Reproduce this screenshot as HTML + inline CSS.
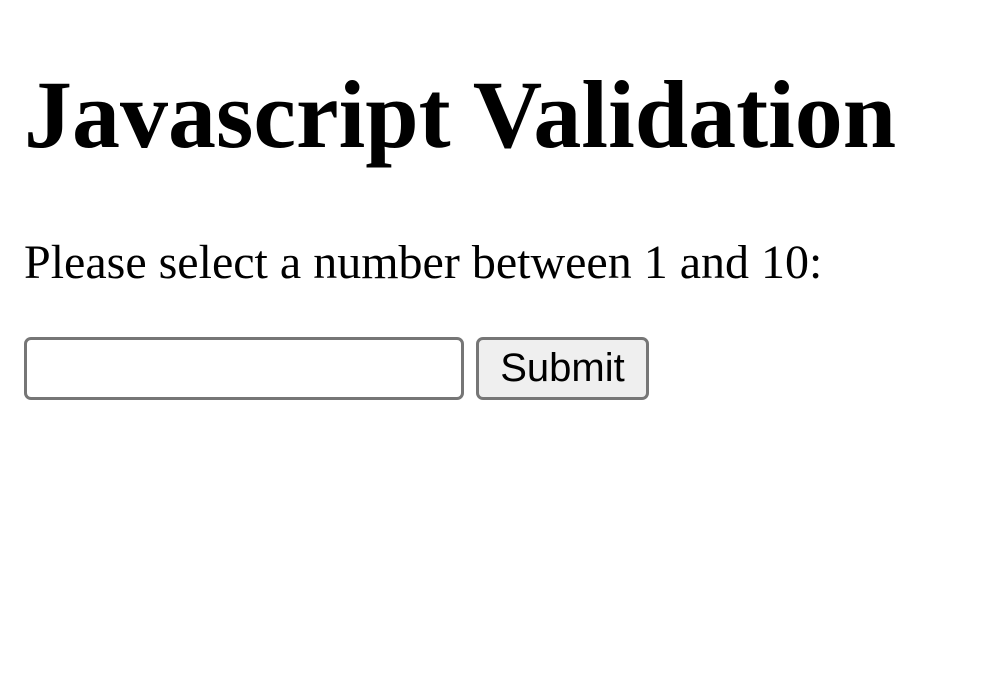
<!DOCTYPE html>
<html>
<head>
<meta charset="utf-8">
<style>
  html,body{margin:0;padding:0;background:#fff;}
  body{width:994px;height:696px;overflow:hidden;position:relative;font-family:"Liberation Serif",serif;color:#000;}
  h1{position:absolute;left:24px;top:60px;margin:0;font-size:96px;font-weight:bold;line-height:110px;white-space:nowrap;}
  p{position:absolute;left:24px;top:235px;margin:0;font-size:48px;line-height:56px;white-space:nowrap;}
  .inp{position:absolute;left:24px;top:337px;width:440px;height:63px;box-sizing:border-box;border:3px solid #767676;border-radius:7px;background:#fff;}
  .btn{position:absolute;left:476px;top:337px;width:173px;height:63px;box-sizing:border-box;border:3px solid #767676;border-radius:7px;background:#efefef;font-family:"Liberation Sans",sans-serif;font-size:40px;line-height:57px;text-align:center;color:#000;}
</style>
</head>
<body>
<h1>Javascript Validation</h1>
<p>Please select a number between 1 and 10:</p>
<div class="inp"></div>
<div class="btn">Submit</div>
</body>
</html>
